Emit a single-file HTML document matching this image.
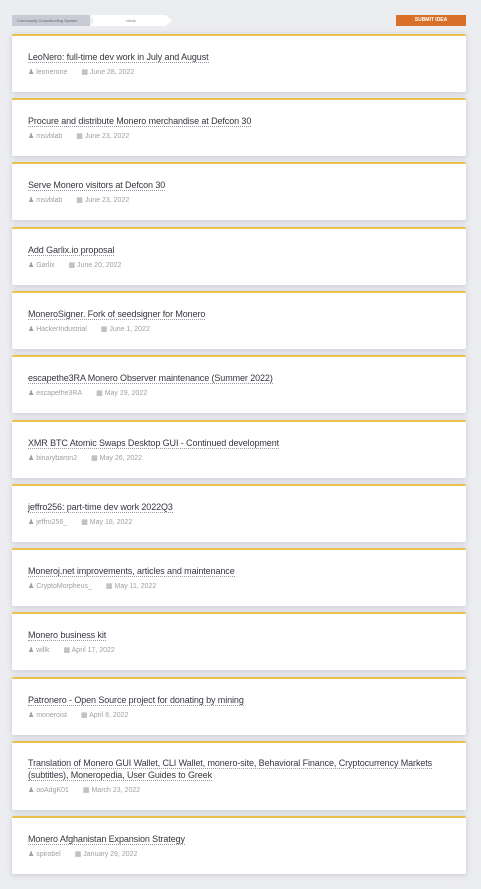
<!DOCTYPE html>
<html><head><meta charset="utf-8"><style>
*{margin:0;padding:0;box-sizing:border-box}
body{width:481px;height:889px;background:#ecedf0;font-family:"Liberation Sans",sans-serif;position:relative;overflow:hidden}
.bc1{position:absolute;left:12px;top:15px;width:78px;height:11px;background:#c9cbd4;font-size:4px;color:#666;line-height:11px;padding-left:5px;white-space:nowrap}
.bc2{position:absolute;left:90px;top:15px;width:82px;height:11px;background:#fff;clip-path:polygon(0 0,92% 0,100% 50%,92% 100%,0 100%,5% 50%);font-size:4px;color:#888;line-height:11px;text-align:center}
.btn{position:absolute;left:396px;top:15px;width:70px;height:11px;background:#d9702a;color:#fff;font-size:5px;font-weight:bold;line-height:11px;text-align:center}
.card{position:absolute;left:12px;width:454px;background:#fff;border-top:2px solid #eac14c;border-radius:2px;box-shadow:0 1px 6px rgba(150,155,180,.45);padding:15px 16px 0 16px;font-size:9px;line-height:12px}
.t{font-size:9px;color:#353540;line-height:12px;display:inline;border-bottom:1px dotted #999;letter-spacing:-0.1px}
.m{font-size:7px;line-height:9px;color:#a0a0a0;margin-top:5px;white-space:nowrap}
.m span{margin-right:14px}
</style></head><body>
<div class="bc1">Community Crowdfunding System</div>
<div class="bc2">Ideas</div>
<div class="btn">SUBMIT IDEA</div>

<div class="card" style="top:34px;height:58px"><div class="t">LeoNero: full-time dev work in July and August</div><div class="m"><span>&#9823; leonerone</span><span>&#9638; June 28, 2022</span></div></div>
<div class="card" style="top:98px;height:58px"><div class="t">Procure and distribute Monero merchandise at Defcon 30</div><div class="m"><span>&#9823; msvblab</span><span>&#9638; June 23, 2022</span></div></div>
<div class="card" style="top:162px;height:58px"><div class="t">Serve Monero visitors at Defcon 30</div><div class="m"><span>&#9823; msvblab</span><span>&#9638; June 23, 2022</span></div></div>
<div class="card" style="top:227px;height:58px"><div class="t">Add Garlix.io proposal</div><div class="m"><span>&#9823; Garlix</span><span>&#9638; June 20, 2022</span></div></div>
<div class="card" style="top:291px;height:58px"><div class="t">MoneroSigner. Fork of seedsigner for Monero</div><div class="m"><span>&#9823; HackerIndustrial</span><span>&#9638; June 1, 2022</span></div></div>
<div class="card" style="top:355px;height:58px"><div class="t">escapethe3RA Monero Observer maintenance (Summer 2022)</div><div class="m"><span>&#9823; escapethe3RA</span><span>&#9638; May 29, 2022</span></div></div>
<div class="card" style="top:420px;height:58px"><div class="t">XMR BTC Atomic Swaps Desktop GUI - Continued development</div><div class="m"><span>&#9823; binarybaron2</span><span>&#9638; May 26, 2022</span></div></div>
<div class="card" style="top:484px;height:58px"><div class="t">jeffro256: part-time dev work 2022Q3</div><div class="m"><span>&#9823; jeffro256_</span><span>&#9638; May 18, 2022</span></div></div>
<div class="card" style="top:548px;height:58px"><div class="t">Moneroj.net improvements, articles and maintenance</div><div class="m"><span>&#9823; CryptoMorpheus_</span><span>&#9638; May 11, 2022</span></div></div>
<div class="card" style="top:612px;height:58px"><div class="t">Monero business kit</div><div class="m"><span>&#9823; willk</span><span>&#9638; April 17, 2022</span></div></div>
<div class="card" style="top:677px;height:58px"><div class="t">Patronero - Open Source project for donating by mining</div><div class="m"><span>&#9823; moneroist</span><span>&#9638; April 8, 2022</span></div></div>
<div class="card" style="top:741px;height:69px;padding-top:14px"><div class="t">Translation of Monero GUI Wallet, CLI Wallet, monero-site, Behavioral Finance, Cryptocurrency Markets (subtitles), Moneropedia, User Guides to Greek</div><div class="m"><span>&#9823; ooAdgK01</span><span>&#9638; March 23, 2022</span></div></div>
<div class="card" style="top:816px;height:58px"><div class="t">Monero Afghanistan Expansion Strategy</div><div class="m"><span>&#9823; spirobel</span><span>&#9638; January 29, 2022</span></div></div>
</body></html>
